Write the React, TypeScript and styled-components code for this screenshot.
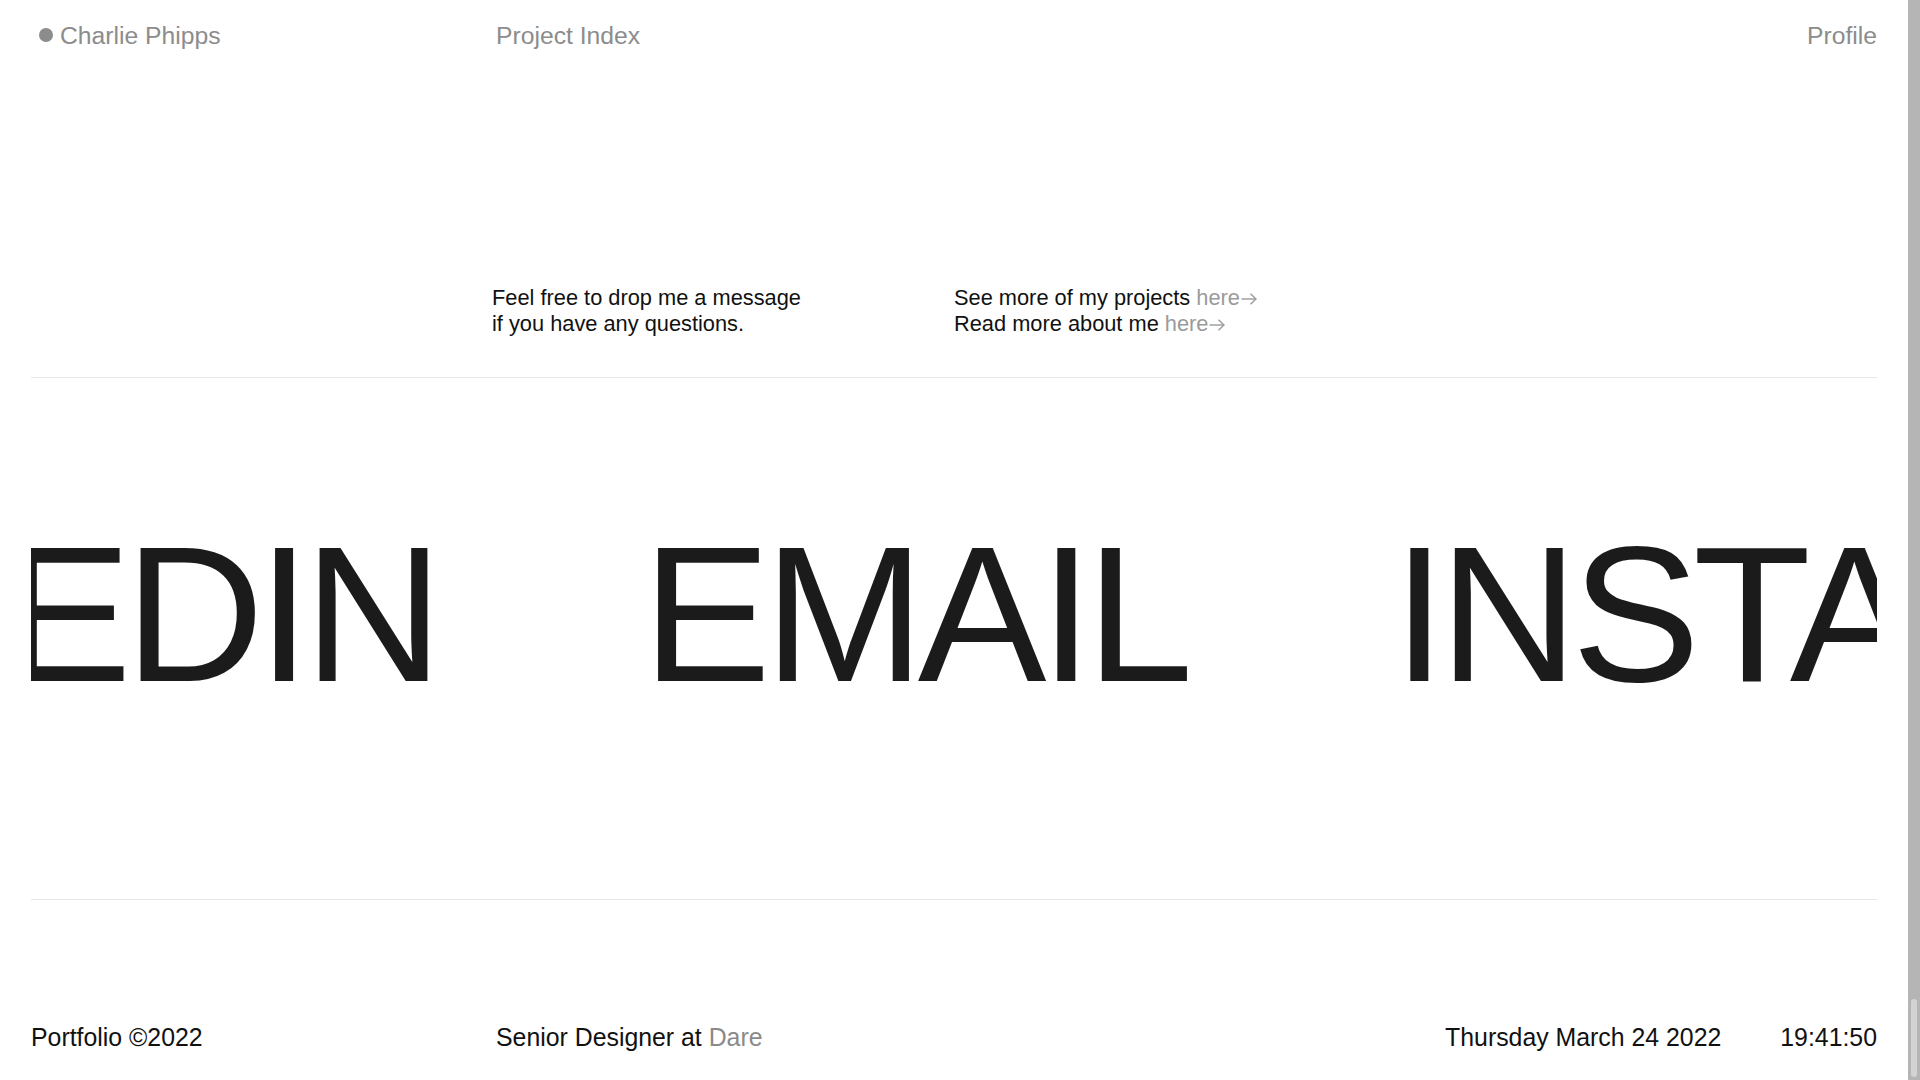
import React from "react";
import styled, { createGlobalStyle } from "styled-components";

const GlobalStyle = createGlobalStyle`
  html, body {
    margin: 0;
    padding: 0;
    background: #ffffff;
    overflow: hidden;
  }
  body {
    font-family: "Liberation Sans", Arial, Helvetica, sans-serif;
    color: #111111;
    -webkit-font-smoothing: antialiased;
  }
  * { box-sizing: border-box; }
`;

const Frame = styled.div`
  display: flex;
  width: 100vw;
  height: 100vh;
`;

const Page = styled.div`
  flex: 1;
  display: flex;
  flex-direction: column;
  padding: 0 31px 0 31px;
  min-width: 0;
`;

const ScrollTrack = styled.div`
  width: 12px;
  height: 100%;
  background: #b5b5b5;
  display: flex;
  flex-direction: column;
  justify-content: flex-end;
  align-items: center;
  padding-bottom: 3px;
`;

const ScrollThumb = styled.div`
  width: 6px;
  height: 78px;
  border-radius: 3px;
  background: #d3d3d3;
`;

const Header = styled.header`
  display: grid;
  grid-template-columns: 465px 1fr auto;
  align-items: center;
  padding-top: 21px;
  font-size: 24.7px;
  line-height: 30px;
  color: #8c8c8c;
`;

const Brand = styled.div`
  display: flex;
  align-items: center;
  gap: 7px;
`;

const Dot = styled.span`
  width: 14px;
  height: 14px;
  border-radius: 50%;
  background: #8c8c8c;
  margin-left: 8px;
  margin-top: -2px;
`;

const NavLink = styled.a<{ $align?: "left" | "right" }>`
  color: inherit;
  text-decoration: none;
  text-align: ${(p) => p.$align ?? "left"};
`;

const Intro = styled.section`
  display: grid;
  grid-template-columns: 461px 462px 1fr;
  margin-top: 234px;
  font-size: 21.8px;
  line-height: 26px;
  color: #111111;
`;

const Copy = styled.p`
  margin: 0;
`;

const Muted = styled.a<{ $tone?: string }>`
  color: ${(p) => p.$tone ?? "#9a9a9a"};
  text-decoration: none;
  white-space: nowrap;
`;

const Arrow = styled.svg`
  width: 16px;
  height: 12px;
  margin-left: 1px;
  vertical-align: 0px;
`;

const Divider = styled.hr<{ $gap: number }>`
  border: none;
  height: 1px;
  background: #e6e6e6;
  margin: ${(p) => p.$gap}px 0 0 0;
`;

const MarqueeWindow = styled.section`
  height: 521px;
  overflow: hidden;
  padding-top: 140px;
`;

const MarqueeTrack = styled.div`
  display: flex;
  gap: 206px;
  width: max-content;
  transform: translateX(-429px);
`;

const BigWord = styled.a`
  font-size: 193px;
  line-height: 193px;
  letter-spacing: -7px;
  color: #1b1b1b;
  text-decoration: none;
  white-space: nowrap;
`;

const Footer = styled.footer`
  display: grid;
  grid-template-columns: 465px 1fr auto;
  align-items: center;
  margin-top: 123px;
  font-size: 24.85px;
  line-height: 30px;
  color: #111111;
`;

const Clock = styled.div`
  display: flex;
  gap: 59px;
`;

const words = ["LINKEDIN", "EMAIL", "INSTAGRAM", "TWITTER"];

function ArrowIcon() {
  return (
    <Arrow viewBox="0 0 16 12" fill="none" stroke="currentColor" strokeWidth="1.4">
      <path d="M0.5 6 H15" />
      <path d="M9.5 0.8 L15 6 L9.5 11.2" />
    </Arrow>
  );
}

export default function App() {
  return (
    <>
      <GlobalStyle />
      <Frame>
        <Page>
          <Header>
            <Brand>
              <Dot />
              <span>Charlie Phipps</span>
            </Brand>
            <NavLink href="#">Project Index</NavLink>
            <NavLink href="#" $align="right">
              Profile
            </NavLink>
          </Header>

          <Intro>
            <div />
            <Copy>
              Feel free to drop me a message
              <br />
              if you have any questions.
            </Copy>
            <Copy>
              See more of my projects{" "}
              <Muted href="#">
                here
                <ArrowIcon />
              </Muted>
              <br />
              Read more about me{" "}
              <Muted href="#">
                here
                <ArrowIcon />
              </Muted>
            </Copy>
          </Intro>

          <Divider $gap={40} />

          <MarqueeWindow>
            <MarqueeTrack>
              {words.map((w) => (
                <BigWord key={w} href="#">
                  {w}
                </BigWord>
              ))}
            </MarqueeTrack>
          </MarqueeWindow>

          <Divider $gap={0} />

          <Footer>
            <span>Portfolio ©2022</span>
            <span>
              Senior Designer at <Muted href="#" $tone="#8a8a8a">Dare</Muted>
            </span>
            <Clock>
              <span>Thursday March 24 2022</span>
              <span>19:41:50</span>
            </Clock>
          </Footer>
        </Page>
        <ScrollTrack>
          <ScrollThumb />
        </ScrollTrack>
      </Frame>
    </>
  );
}
